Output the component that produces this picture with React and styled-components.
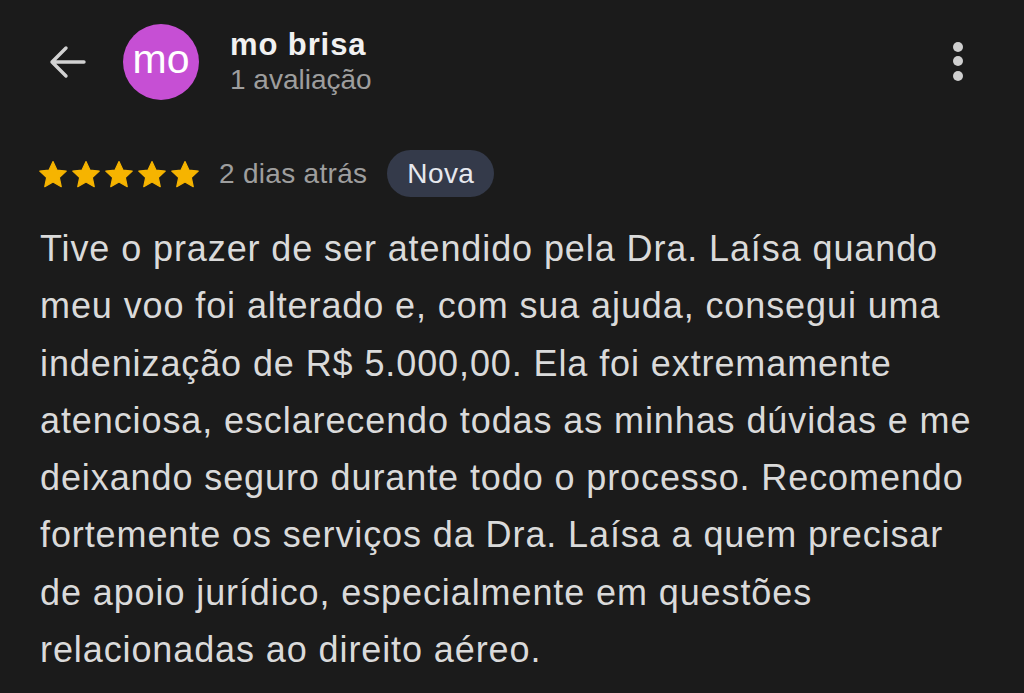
import React from "react";
import styled, { createGlobalStyle } from "styled-components";

const Global = createGlobalStyle`
  html, body { margin: 0; padding: 0; background: #1b1b1b; }
  body { font-family: "Liberation Sans", Arial, sans-serif; -webkit-font-smoothing: antialiased; }
`;

const Page = styled.div`
  width: 1024px;
  height: 693px;
  background: #1b1b1b;
  overflow: hidden;
  box-sizing: border-box;
  padding: 24px 0 0 40px;
`;

const Header = styled.div`
  display: flex;
  align-items: center;
  height: 76px;
  padding-left: 8px;
`;

const BackButton = styled.div`
  width: 38px;
  height: 38px;
  display: flex;
  align-items: center;
  justify-content: center;
  margin-right: 37px;
`;

const Avatar = styled.div`
  width: 76px;
  height: 76px;
  border-radius: 50%;
  background: #c64fd4;
  color: #ffffff;
  display: flex;
  align-items: center;
  justify-content: center;
  font-size: 41px;
  padding-bottom: 5px;
  box-sizing: border-box;
  flex-shrink: 0;
`;

const NameCol = styled.div`
  display: flex;
  flex-direction: column;
  margin-left: 31px;
  flex: 1;
`;

const Name = styled.div`
  font-size: 31px;
  line-height: 36px;
  font-weight: 700;
  color: #f1f1f1;
  letter-spacing: 0.9px;
`;

const Sub = styled.div`
  font-size: 28px;
  line-height: 34px;
  color: #9e9e9e;
`;

const Kebab = styled.div`
  display: flex;
  flex-direction: column;
  gap: 4.5px;
  margin-right: 61px;
  margin-top: -2px;
`;

const Dot = styled.span`
  width: 10px;
  height: 10px;
  border-radius: 50%;
  background: #cfcfcf;
`;

const MetaRow = styled.div`
  display: flex;
  align-items: center;
  margin-top: 50px;
  height: 47px;
`;

const Stars = styled.div`
  display: flex;
  gap: 1px;
  margin-left: -3px;
  margin-top: 2px;
`;

const Ago = styled.span`
  font-size: 28px;
  color: #9e9e9e;
  margin-left: 18px;
  letter-spacing: 0.3px;
`;

const Badge = styled.span`
  margin-left: 20px;
  height: 47px;
  padding: 0 20px;
  border-radius: 24px;
  background: #343a4a;
  color: #e6e8ee;
  font-size: 28px;
  letter-spacing: 0.4px;
  display: inline-flex;
  align-items: center;
  box-sizing: border-box;
`;

const Body = styled.p`
  margin: 23px 0 0 0;
  font-size: 36px;
  line-height: 57.3px;
  letter-spacing: 0.9px;
  color: #dadada;
  width: 952px;
`;

const Star = () => (
  <svg width="32" height="32" viewBox="0 0 32 32">
    <path
      d="M16 2.5l3.95 8.6 9.3 1-6.95 6.350 1.95 9.2L16 22.9l-8.25 4.75 1.95-9.2L2.75 12.1l9.3-1z"
      fill="#f6b400"
      stroke="#f6b400"
      strokeWidth="1.2"
      strokeLinejoin="round"
    />
  </svg>
);

export default function App() {
  return (
    <>
      <Global />
      <Page>
        <Header>
          <BackButton>
            <svg width="38" height="38" viewBox="0 0 38 38" fill="none">
              <path
                d="M36 19H4M18 5L4 19l14 14"
                stroke="#d2d2d2"
                strokeWidth="3.4"
                strokeLinecap="round"
                strokeLinejoin="round"
              />
            </svg>
          </BackButton>
          <Avatar>mo</Avatar>
          <NameCol>
            <Name>mo brisa</Name>
            <Sub>1 avaliação</Sub>
          </NameCol>
          <Kebab>
            <Dot />
            <Dot />
            <Dot />
          </Kebab>
        </Header>
        <MetaRow>
          <Stars>
            {[0, 1, 2, 3, 4].map((i) => (
              <Star key={i} />
            ))}
          </Stars>
          <Ago>2 dias atrás</Ago>
          <Badge>Nova</Badge>
        </MetaRow>
        <Body>
          Tive o prazer de ser atendido pela Dra. Laísa quando meu voo foi alterado e, com sua ajuda, consegui uma indenização de R$ 5.000,00. Ela foi extremamente atenciosa, esclarecendo todas as minhas dúvidas e me deixando seguro durante todo o processo. Recomendo fortemente os serviços da Dra. Laísa a quem precisar de apoio jurídico, especialmente em questões relacionadas ao direito aéreo.
        </Body>
      </Page>
    </>
  );
}
